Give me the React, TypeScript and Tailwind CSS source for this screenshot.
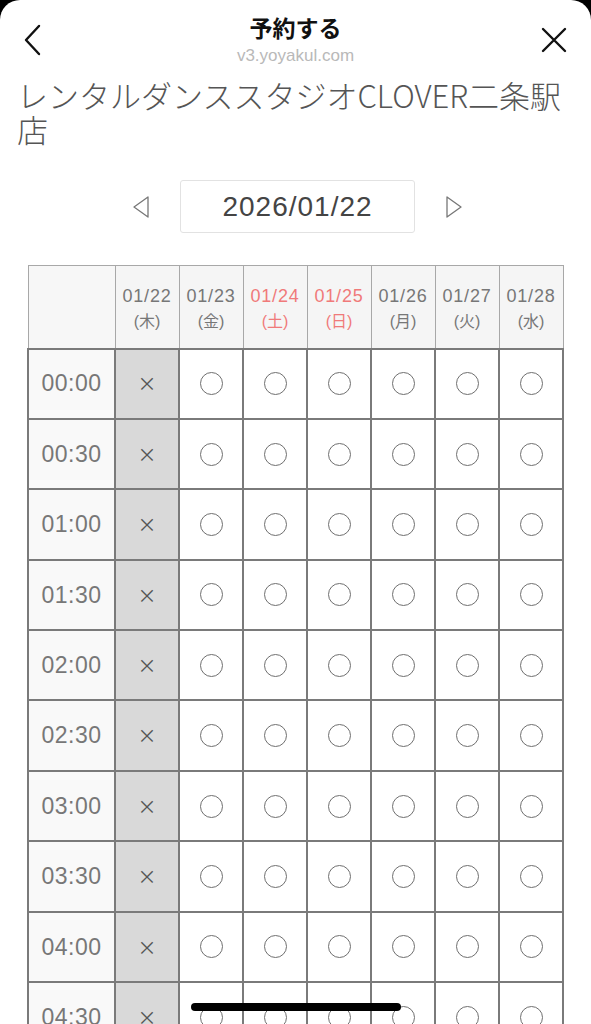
import React from "react";

const days = [
  { date: "01/22", dow: "木", red: false },
  { date: "01/23", dow: "金", red: false },
  { date: "01/24", dow: "土", red: true },
  { date: "01/25", dow: "日", red: true },
  { date: "01/26", dow: "月", red: false },
  { date: "01/27", dow: "火", red: false },
  { date: "01/28", dow: "水", red: false },
];

const times = [
  "00:00", "00:30", "01:00", "01:30", "02:00", "02:30", "03:00", "03:30", "04:00", "04:30", "05:00",
];

function Circle() {
  return <div className="mx-auto h-[23px] w-[23px] rounded-full border border-[#6f6f6f]" />;
}

export default function App() {
  return (
    <div className="h-[1024px] overflow-hidden bg-black font-['Noto_Sans_CJK_JP',sans-serif]">
      <div className="relative h-full overflow-hidden rounded-t-[20px] bg-white">
        {/* Header */}
        <div className="relative flex h-[78px] flex-col items-center pt-[12px]">
          <button className="absolute left-[22px] top-[24px] text-[#111]">
            <svg width="22" height="32" viewBox="0 0 22 32" fill="none">
              <path d="M17 2 L4 16 L17 30" stroke="currentColor" strokeWidth="2.4" strokeLinecap="round" strokeLinejoin="round" />
            </svg>
          </button>
          <div className="text-[23px] font-bold leading-[30px] text-[#111]">予約する</div>
          <div className="mt-[4px] text-[17px] leading-[20px] text-[#b9b9b9] font-['Liberation_Sans',sans-serif]">v3.yoyakul.com</div>
          <button className="absolute right-[24px] top-[27px] text-[#111]">
            <svg width="26" height="26" viewBox="0 0 26 26" fill="none">
              <path d="M2 2 L24 24 M24 2 L2 24" stroke="currentColor" strokeWidth="2.4" strokeLinecap="round" />
            </svg>
          </button>
        </div>

        <h1 className="w-[578px] pl-[17px] text-[31px] font-light leading-[34px] text-[#555]">
          レンタルダンススタジオCLOVER二条駅店
        </h1>

        {/* Date selector */}
        <div className="mt-[34px] flex items-center justify-center gap-[30px] pl-[4px]">
          <svg width="18" height="24" viewBox="0 0 18 24" fill="none">
            <path d="M16 2 L2 12 L16 22 Z" stroke="#777" strokeWidth="1.3" strokeLinejoin="round" />
          </svg>
          <div className="flex h-[53px] w-[235px] items-center justify-center rounded-[3px] border border-[#e2e2e2] text-[28px] tracking-[1px] text-[#444] font-['Liberation_Sans',sans-serif]">
            2026/01/22
          </div>
          <svg width="18" height="24" viewBox="0 0 18 24" fill="none">
            <path d="M2 2 L16 12 L2 22 Z" stroke="#777" strokeWidth="1.3" strokeLinejoin="round" />
          </svg>
        </div>

        {/* Calendar table */}
        <div className="mt-[32px] px-[27px]">
          <table className="w-[537px] table-fixed border-collapse">
            <colgroup>
              <col className="w-[87px]" />
              {days.map((d) => (
                <col key={d.date} className="w-[64px]" />
              ))}
            </colgroup>
            <thead>
              <tr className="h-[83px]">
                <th className="border border-[#a8a8a8] bg-[#f7f7f7]" />
                {days.map((d) => (
                  <th
                    key={d.date}
                    className={`border border-[#a8a8a8] bg-[#f5f5f5] pt-[4px] text-[18px] font-normal leading-[25px] tracking-[0.8px] font-['Liberation_Sans','Noto_Sans_CJK_JP',sans-serif] ${d.red ? "text-[#f07a7a]" : "text-[#777]"}`}
                  >
                    <div>{d.date}</div>
                    <div className="text-[16px] tracking-normal">({d.dow})</div>
                  </th>
                ))}
              </tr>
            </thead>
            <tbody>
              {times.map((t) => (
                <tr key={t} className="h-[70.4px]">
                  <td className="border-2 border-[#7a7a7a] bg-[#f9f9f9] text-center text-[23px] tracking-[0.5px] text-[#777] font-['Liberation_Sans',sans-serif]">
                    {t}
                  </td>
                  <td className="border-2 border-[#7a7a7a] bg-[#d9d9d9] text-center text-[19px] text-[#555]">×</td>
                  {days.slice(1).map((d) => (
                    <td key={d.date} className="border-2 border-[#7a7a7a] bg-white">
                      <Circle />
                    </td>
                  ))}
                </tr>
              ))}
            </tbody>
          </table>
        </div>

        {/* Home indicator */}
        <div className="absolute bottom-[13px] left-1/2 h-[8px] w-[210px] -translate-x-1/2 rounded-full bg-black" />
      </div>
    </div>
  );
}
